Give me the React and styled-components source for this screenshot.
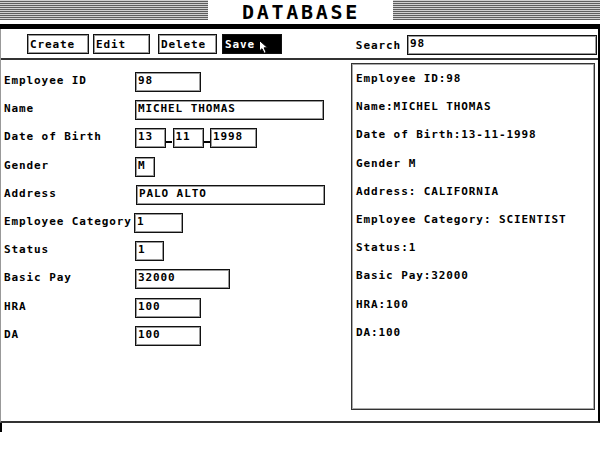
import React from "react";
import styled, { createGlobalStyle } from "styled-components";

const GlobalStyle = createGlobalStyle`
  body {
    margin: 0;
    background: #fff;
  }
`;

const formRows = [
  { label: "Employee ID", fields: [{ w: 66, v: "98" }] },
  { label: "Name", fields: [{ w: 189, v: "MICHEL THOMAS" }] },
  {
    label: "Date of Birth",
    fields: [
      { w: 31, v: "13" },
      { w: 31, v: "11" },
      { w: 47, v: "1998" },
    ],
    dashed: true,
  },
  { label: "Gender", fields: [{ w: 20, v: "M" }] },
  { label: "Address", fields: [{ w: 189, v: "PALO ALTO" }], nudge: 1 },
  { label: "Employee Category", fields: [{ w: 49, v: "1" }], nudge: -1 },
  { label: "Status", fields: [{ w: 29, v: "1" }] },
  { label: "Basic Pay", fields: [{ w: 95, v: "32000" }] },
  { label: "HRA", fields: [{ w: 66, v: "100" }] },
  { label: "DA", fields: [{ w: 66, v: "100" }] },
];

const summary = [
  "Employee ID:98",
  "Name:MICHEL THOMAS",
  "Date of Birth:13-11-1998",
  "Gender M",
  "Address: CALIFORNIA",
  "Employee Category: SCIENTIST",
  "Status:1",
  "Basic Pay:32000",
  "HRA:100",
  "DA:100",
];

const App = () => {
  return (
    <Screen>
      <GlobalStyle />
      <TitleBar>
        <Stripes />
        <TitleBox>DATABASE</TitleBox>
        <Stripes />
      </TitleBar>
      <Band />
      <Frame>
        <Toolbar>
          <Button width={62}>Create</Button>
          <Button width={57} gap={4}>Edit</Button>
          <Button width={59} gap={8}>Delete</Button>
          <Button width={60} gap={5} active>
            Save
            <Pointer viewBox="0 0 10 14" width="10" height="14">
              <path
                d="M0.5 0.5 L0.5 11 L3 8.7 L5.2 13.3 L7.2 12.4 L5.1 7.8 L8.6 7.8 Z"
                fill="#fff"
                stroke="#000"
                strokeWidth="1"
              />
            </Pointer>
          </Button>
          <SearchGroup>
            <span>Search</span>
            <Field width={190}>98</Field>
          </SearchGroup>
        </Toolbar>
        <Main>
          <Form>
            {formRows.map((row) => (
              <Row key={row.label}>
                <Label>{row.label}</Label>
                <Fields nudge={row.nudge || 0}>
                  {row.fields.map((f, i) => (
                    <React.Fragment key={i}>
                      {row.dashed && i > 0 && <Dash />}
                      <Field width={f.w}>{f.v}</Field>
                    </React.Fragment>
                  ))}
                </Fields>
              </Row>
            ))}
          </Form>
          <Panel>
            {summary.map((line) => (
              <PanelLine key={line}>{line}</PanelLine>
            ))}
          </Panel>
        </Main>
      </Frame>
      <Tick />
    </Screen>
  );
};

export default App;

const Screen = styled.div`
  width: 600px;
  height: 450px;
  overflow: hidden;
  background: #fff;
  color: #000;
  font-family: "DejaVu Sans Mono", "Liberation Mono", monospace;
  font-weight: bold;
  font-size: 11px;
  letter-spacing: 0.9px;
  display: flex;
  flex-direction: column;
`;
const TitleBar = styled.header`
  display: flex;
  height: 24px;
`;
const Stripes = styled.div`
  flex: 1;
  height: 20px;
  background: repeating-linear-gradient(
    to bottom,
    #d0d0d0 0 1px,
    #5e5e5e 1px 2px
  );
`;
const TitleBox = styled.div`
  width: 185px;
  display: flex;
  align-items: center;
  justify-content: center;
  padding-left: 2px;
  box-sizing: border-box;
  font-size: 20px;
  letter-spacing: 2.7px;
`;
const Band = styled.div`
  height: 5px;
  background: #000;
`;
const Frame = styled.div`
  height: 394px;
  box-sizing: border-box;
  border-left: 1px solid #999;
  border-right: 2px solid #000;
  border-bottom: 2px solid #333;
  display: flex;
  flex-direction: column;
`;
const Toolbar = styled.div`
  height: 31px;
  box-sizing: border-box;
  border-bottom: 2px solid #333;
  display: flex;
  align-items: flex-start;
  padding: 5px 1px 0 26px;
`;
const Button = styled.div`
  position: relative;
  width: ${(p) => p.width}px;
  height: 20px;
  box-sizing: border-box;
  margin-left: ${(p) => p.gap || 0}px;
  border: 1px solid #111;
  box-shadow: inset 0 0 0 1px ${(p) => (p.active ? "#000" : "#9a9a9a")};
  background: ${(p) => (p.active ? "#000" : "#fff")};
  color: ${(p) => (p.active ? "#fff" : "#000")};
  display: flex;
  align-items: center;
  padding-left: 2px;
`;
const Pointer = styled.svg`
  position: absolute;
  left: 36px;
  top: 5px;
`;
const SearchGroup = styled.div`
  margin-left: auto;
  display: flex;
  align-items: center;
  gap: 6px;
  height: 20px;
  padding-top: 1px;
`;
const Field = styled.div`
  width: ${(p) => p.width}px;
  height: 20px;
  box-sizing: border-box;
  border: 1px solid #111;
  box-shadow: inset 0 0 0 1px #9a9a9a;
  padding: 2px 0 0 2px;
  line-height: 12px;
  white-space: nowrap;
`;
const Main = styled.div`
  flex: 1;
  display: flex;
  align-items: flex-start;
`;
const Form = styled.div`
  width: 350px;
  padding: 12px 0 0 3px;
  box-sizing: border-box;
  display: flex;
  flex-direction: column;
`;
const Row = styled.div`
  display: flex;
  height: 28.2px;
  align-items: flex-start;
`;
const Label = styled.div`
  width: 131px;
  height: 20px;
  line-height: 18px;
  white-space: nowrap;
`;
const Fields = styled.div`
  display: flex;
  margin-left: ${(p) => p.nudge}px;
`;
const Dash = styled.span`
  width: 6px;
  height: 15px;
  box-sizing: border-box;
  border-bottom: 2px solid #000;
  margin: 0 0.5px 0 0;
`;
const Panel = styled.div`
  width: 244px;
  height: 347px;
  margin-top: 3px;
  box-sizing: border-box;
  border: 1px solid #333;
  box-shadow: inset 0 0 0 1px #aaa;
  padding: 1px 0 0 4px;
`;
const PanelLine = styled.div`
  height: 28.2px;
  line-height: 27px;
  white-space: nowrap;
`;
const Tick = styled.div`
  width: 2px;
  height: 9px;
  background: #000;
`;
